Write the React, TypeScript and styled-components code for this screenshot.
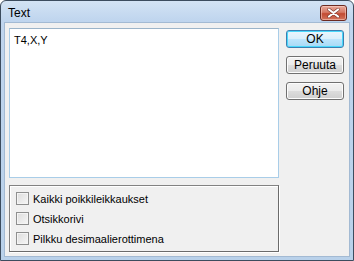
import React from "react";
import styled, { createGlobalStyle } from "styled-components";

const Global = createGlobalStyle`
  html, body { margin: 0; padding: 0; background: #fff; }
  body { font-family: "Liberation Sans", Arial, sans-serif; }
  * { box-sizing: border-box; }
`;

const Window = styled.div`
  width: 354px;
  height: 261px;
  border: 1px solid #3c4c5e;
  border-radius: 6px 6px 0 0;
  background: linear-gradient(#d3e3f4, #bfd5ee 20px, #b9d1ea);
  display: flex;
  flex-direction: column;
  padding: 0 3px 3px 3px;
  overflow: hidden;
`;

const TitleBar = styled.div`
  height: 21px;
  display: flex;
  align-items: center;
  justify-content: space-between;
  padding: 0 3px 0 4px;
`;

const Title = styled.span`
  font-family: "Liberation Sans", "DejaVu Sans", sans-serif;
  font-size: 12px;
  color: #000;
  padding-top: 2px;
`;

const CloseButton = styled.div`
  width: 27px;
  height: 16px;
  margin-top: 2px;
  border: 1px solid #6c2b22;
  border-radius: 3px;
  background: linear-gradient(#e9a99b, #d67a66 45%, #c24a32 55%, #d3735b);
  box-shadow: inset 0 0 0 1px rgba(255, 220, 210, 0.5);
  display: flex;
  align-items: center;
  justify-content: center;
`;

const Client = styled.div`
  flex: 1;
  background: #f0f0f0;
  border: 1px solid #a3bad3;
  display: flex;
  gap: 7px;
  padding: 5px 5px 0 4px;
`;

const LeftColumn = styled.div`
  width: 271px;
  display: flex;
  flex-direction: column;
  gap: 7px;
`;

const TextArea = styled.div`
  height: 150px;
  background: #fff;
  border: 1px solid #a9cde8;
  border-top-color: #9bb4c9;
  padding: 5px 4px;
  font-size: 11px;
  color: #000;
`;

const GroupBox = styled.div`
  height: 67px;
  border: 1px solid #828282;
  border-right-color: #6b6b6b;
  border-bottom-color: #6b6b6b;
  box-shadow: inset 1px 1px 0 #fff, 1px 1px 0 #fff;
  display: flex;
  flex-direction: column;
  gap: 7px;
  padding: 6px 6px;
`;

const CheckRow = styled.label`
  display: flex;
  align-items: center;
  gap: 4px;
  height: 13px;
  font-size: 11px;
  color: #000;
`;

const Box = styled.span`
  width: 13px;
  height: 13px;
  flex: none;
  border: 1px solid #8e8f8f;
  background: linear-gradient(135deg, #dcdcdc, #f6f6f6);
  box-shadow: inset 0 0 0 1px #f4f4f4;
`;

const RightColumn = styled.div`
  display: flex;
  flex-direction: column;
  gap: 8px;
  padding-top: 2px;
`;

const Button = styled.div<{ $default?: boolean }>`
  width: 58px;
  height: 18px;
  border: 1px solid ${(p) => (p.$default ? "#3c7fb1" : "#707070")};
  border-radius: 3px;
  background: ${(p) =>
    p.$default
      ? "linear-gradient(#eaf6fd, #d9f0fc 50%, #bee6fd 50%, #a7d9f5)"
      : "linear-gradient(#f2f2f2, #ebebeb 50%, #dddddd 50%, #cfcfcf)"};
  box-shadow: inset 0 0 0 1px ${(p) => (p.$default ? "#48d8fb" : "#fcfcfc")};
  display: flex;
  align-items: center;
  justify-content: center;
  font-size: 12px;
  color: #000;
`;

export default function App() {
  return (
    <>
      <Global />
      <Window>
        <TitleBar>
          <Title>Text</Title>
          <CloseButton>
            <svg width="13" height="10" viewBox="0 0 13 10">
              <path d="M2 1.5 L11 8.5 M11 1.5 L2 8.5" stroke="#7a3a30" strokeWidth="3.4" strokeLinecap="round" />
              <path d="M2 1.5 L11 8.5 M11 1.5 L2 8.5" stroke="#fff" strokeWidth="2.2" strokeLinecap="round" />
            </svg>
          </CloseButton>
        </TitleBar>
        <Client>
          <LeftColumn>
            <TextArea>T4,X,Y</TextArea>
            <GroupBox>
              <CheckRow><Box />Kaikki poikkileikkaukset</CheckRow>
              <CheckRow><Box />Otsikkorivi</CheckRow>
              <CheckRow><Box />Pilkku desimaalierottimena</CheckRow>
            </GroupBox>
          </LeftColumn>
          <RightColumn>
            <Button $default>OK</Button>
            <Button>Peruuta</Button>
            <Button>Ohje</Button>
          </RightColumn>
        </Client>
      </Window>
    </>
  );
}
